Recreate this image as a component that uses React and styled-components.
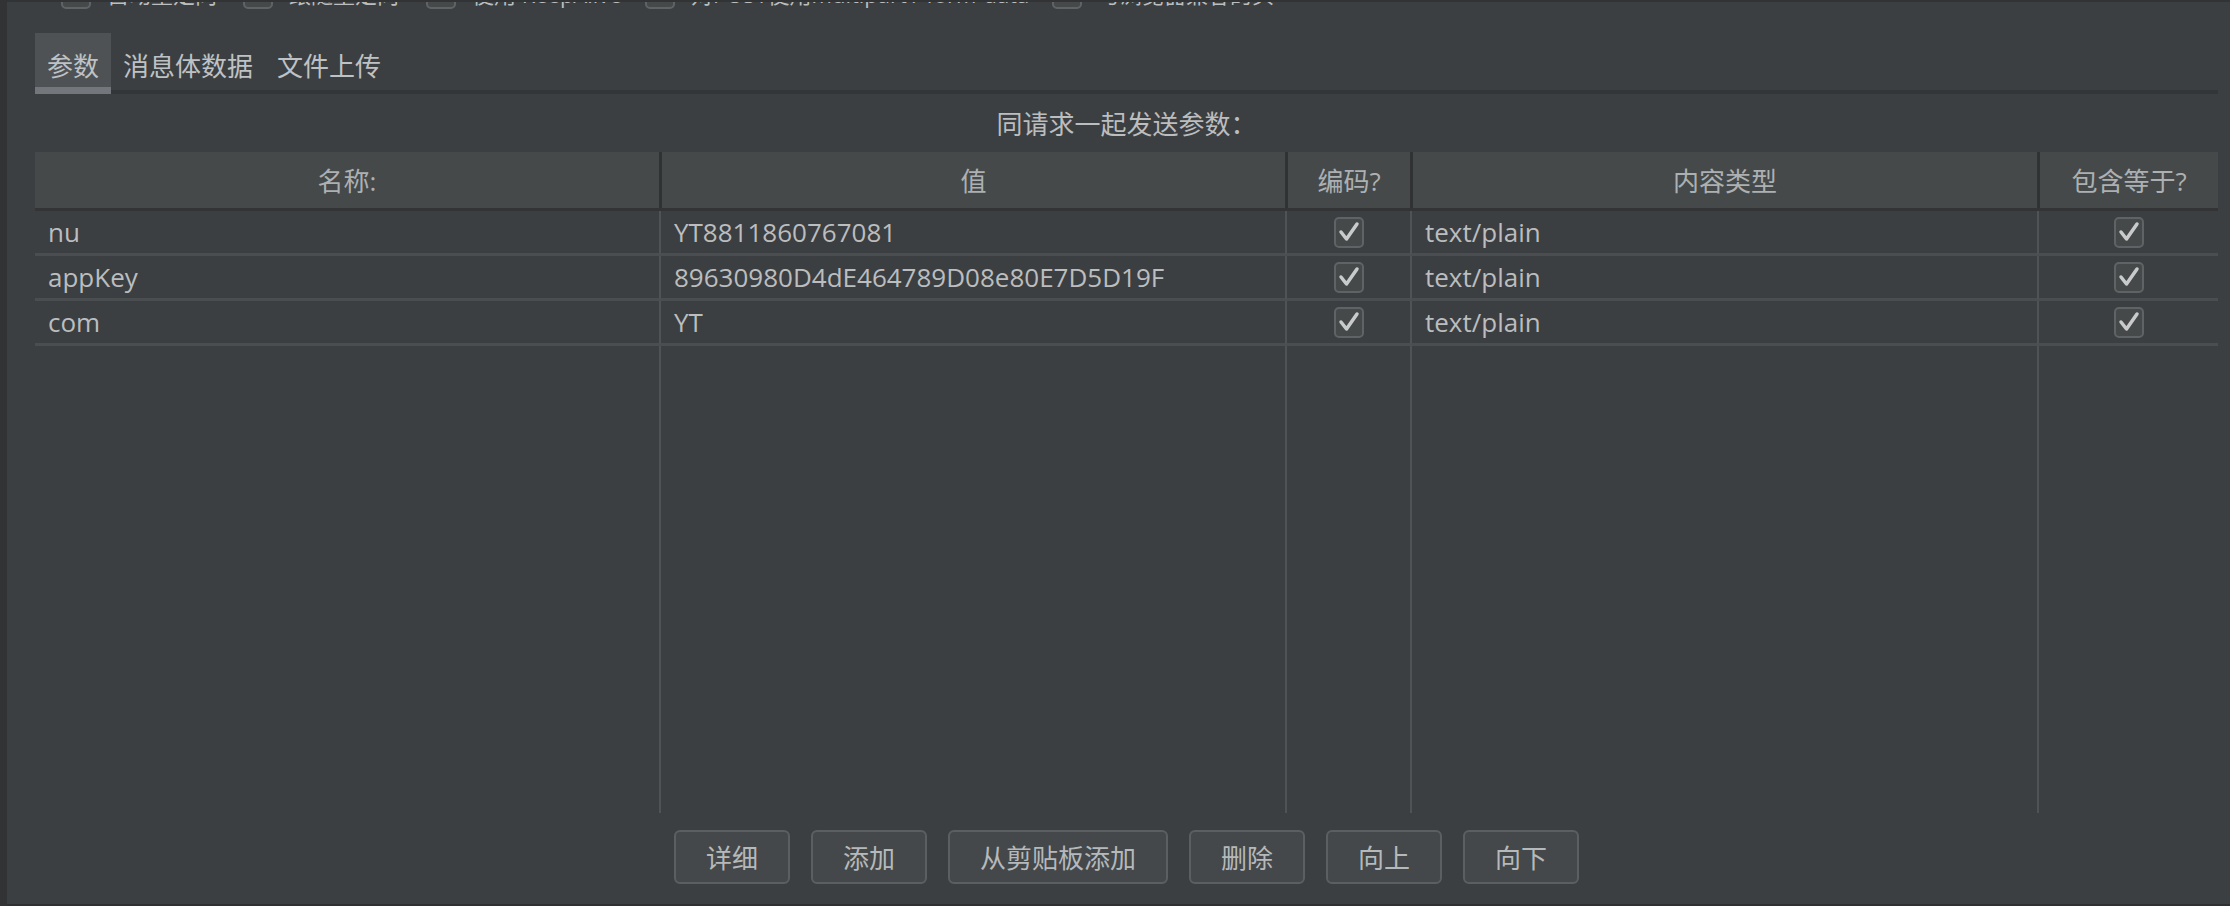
import React from 'react';
import styled, { createGlobalStyle } from 'styled-components';

const GlobalStyle = createGlobalStyle`
  html, body {
    margin: 0;
    padding: 0;
    background-color: #3c3f41;
  }

  body {
    font-family: "Open Sans", "Noto Sans CJK SC", sans-serif;
    color: #bbbdbf;
  }

  * {
    box-sizing: border-box;
  }
`;

const StyledFrame = styled.div`
  display: flex;
  width: 2230px;
  height: 906px;
  overflow: hidden;
  background-color: #3c3f41;
`;

const StyledSideStrip = styled.div`
  width: 7px;
  flex-shrink: 0;
  background-color: #313335;
`;

const StyledMain = styled.div`
  flex: 1;
  display: flex;
  flex-direction: column;
  overflow: hidden;
  border-top: 2px solid #313335;
  border-bottom: 2px solid #2e3032;
`;

const StyledOptionsRow = styled.div`
  display: flex;
  align-items: center;
  height: 30px;
  margin-top: -24px;
  padding-left: 54px;
  flex-shrink: 0;
`;

const StyledOptionItem = styled.div`
  display: flex;
  align-items: center;
  gap: 16px;
  width: ${props => props.width}px;
  flex-shrink: 0;
  font-size: 22px;
  color: #bbbdbf;
  white-space: nowrap;
`;

const StyledBox = styled.span`
  display: inline-flex;
  align-items: center;
  justify-content: center;
  width: 30px;
  height: 31px;
  flex-shrink: 0;
  border: 2px solid #606366;
  border-radius: 5px;
  background-color: #45494a;
`;

const StyledTabPanel = styled.div`
  flex: 1;
  display: flex;
  flex-direction: column;
  margin-top: 25px;
  padding: 0 12px 0 28px;
`;

const StyledTabBar = styled.div`
  display: flex;
  align-items: stretch;
  height: 61px;
  border-bottom: 4px solid #333638;
  flex-shrink: 0;
`;

const StyledTab = styled.div`
  display: flex;
  align-items: center;
  height: 61px;
  margin-bottom: -4px;
  padding: 10px 12px 0 12px;
  font-size: 26px;
  color: #bfc2c5;
  background-color: ${props => (props.active ? '#4e5254' : 'transparent')};
  border-bottom: 7px solid ${props => (props.active ? '#73777b' : 'transparent')};
`;

const StyledCaption = styled.div`
  height: 58px;
  display: flex;
  align-items: center;
  justify-content: center;
  font-size: 26px;
  color: #bbbdbf;
  flex-shrink: 0;
`;

const StyledTable = styled.div`
  display: flex;
  flex-direction: column;
  height: 661px;
  flex-shrink: 0;
`;

const columns = '624px 626px 125px 627px 1fr';

const StyledHeaderRow = styled.div`
  display: grid;
  grid-template-columns: ${columns};
  height: 59px;
  border-bottom: 3px solid #323436;
  flex-shrink: 0;
`;

const StyledHeadCell = styled.div`
  display: flex;
  align-items: center;
  justify-content: center;
  background-color: #45494a;
  font-size: 26px;
  color: #adb0b2;
  border-left: ${props => (props.first ? 'none' : '3px solid #303234')};
`;

const StyledBody = styled.div`
  flex: 1;
  display: grid;
  grid-template-columns: ${columns};
  grid-template-rows: repeat(3, 45px) 1fr;
`;

const StyledCell = styled.div`
  display: flex;
  align-items: center;
  justify-content: ${props => (props.center ? 'center' : 'flex-start')};
  padding-left: ${props => (props.center ? 0 : 13)}px;
  font-size: 26px;
  color: #bbbdbf;
  white-space: nowrap;
  border-left: ${props => (props.first ? 'none' : '2px solid #4f5355')};
  border-bottom: ${props => (props.filler ? 'none' : '3px solid #4a4e50')};
`;

const StyledButtonBar = styled.div`
  display: flex;
  justify-content: center;
  gap: 21px;
  margin-top: 17px;
  flex-shrink: 0;
`;

const StyledButton = styled.button`
  height: 54px;
  padding: 0 30px;
  border: 2px solid #5c5f61;
  border-radius: 6px;
  background-color: #44484a;
  font-family: "Open Sans", "Noto Sans CJK SC", sans-serif;
  font-size: 26px;
  color: #b6b9bb;
  cursor: pointer;
`;

const CheckBox = ({ checked }) => (
  <StyledBox>
    {checked && (
      <svg width="26" height="26" viewBox="0 0 26 26">
        <polyline
          points="5,13 10.5,20 21,5"
          fill="none"
          stroke="#c8cacc"
          strokeWidth="3.5"
          strokeLinecap="round"
          strokeLinejoin="round"
        />
      </svg>
    )}
  </StyledBox>
);

const options = [
  { label: '自动重定向', width: 182 },
  { label: '跟随重定向', width: 183 },
  { label: '使用 KeepAlive', width: 219 },
  { label: '对POST使用multipart / form-data', width: 407 },
  { label: '与浏览器兼容的头', width: 300 }
];

const tabs = ['参数', '消息体数据', '文件上传'];

const headers = ['名称:', '值', '编码?', '内容类型', '包含等于?'];

const params = [
  { name: 'nu', value: 'YT8811860767081', type: 'text/plain' },
  { name: 'appKey', value: '89630980D4dE464789D08e80E7D5D19F', type: 'text/plain' },
  { name: 'com', value: 'YT', type: 'text/plain' }
];

const buttons = ['详细', '添加', '从剪贴板添加', '删除', '向上', '向下'];

export default function App() {
  return (
    <>
      <GlobalStyle />
      <StyledFrame>
        <StyledSideStrip />
        <StyledMain>
          <StyledOptionsRow>
            {options.map(option => (
              <StyledOptionItem key={option.label} width={option.width}>
                <CheckBox />
                <span>{option.label}</span>
              </StyledOptionItem>
            ))}
          </StyledOptionsRow>

          <StyledTabPanel>
            <StyledTabBar>
              {tabs.map((tab, i) => (
                <StyledTab key={tab} active={i === 0}>{tab}</StyledTab>
              ))}
            </StyledTabBar>

            <StyledCaption>同请求一起发送参数：</StyledCaption>

            <StyledTable>
              <StyledHeaderRow>
                {headers.map((header, i) => (
                  <StyledHeadCell key={header} first={i === 0}>{header}</StyledHeadCell>
                ))}
              </StyledHeaderRow>
              <StyledBody>
                {params.map(param => (
                  <React.Fragment key={param.name}>
                    <StyledCell first>{param.name}</StyledCell>
                    <StyledCell>{param.value}</StyledCell>
                    <StyledCell center><CheckBox checked /></StyledCell>
                    <StyledCell>{param.type}</StyledCell>
                    <StyledCell center><CheckBox checked /></StyledCell>
                  </React.Fragment>
                ))}
                <StyledCell first filler />
                <StyledCell filler />
                <StyledCell filler />
                <StyledCell filler />
                <StyledCell filler />
              </StyledBody>
            </StyledTable>

            <StyledButtonBar>
              {buttons.map(label => (
                <StyledButton key={label} type="button">{label}</StyledButton>
              ))}
            </StyledButtonBar>
          </StyledTabPanel>
        </StyledMain>
      </StyledFrame>
    </>
  );
}
